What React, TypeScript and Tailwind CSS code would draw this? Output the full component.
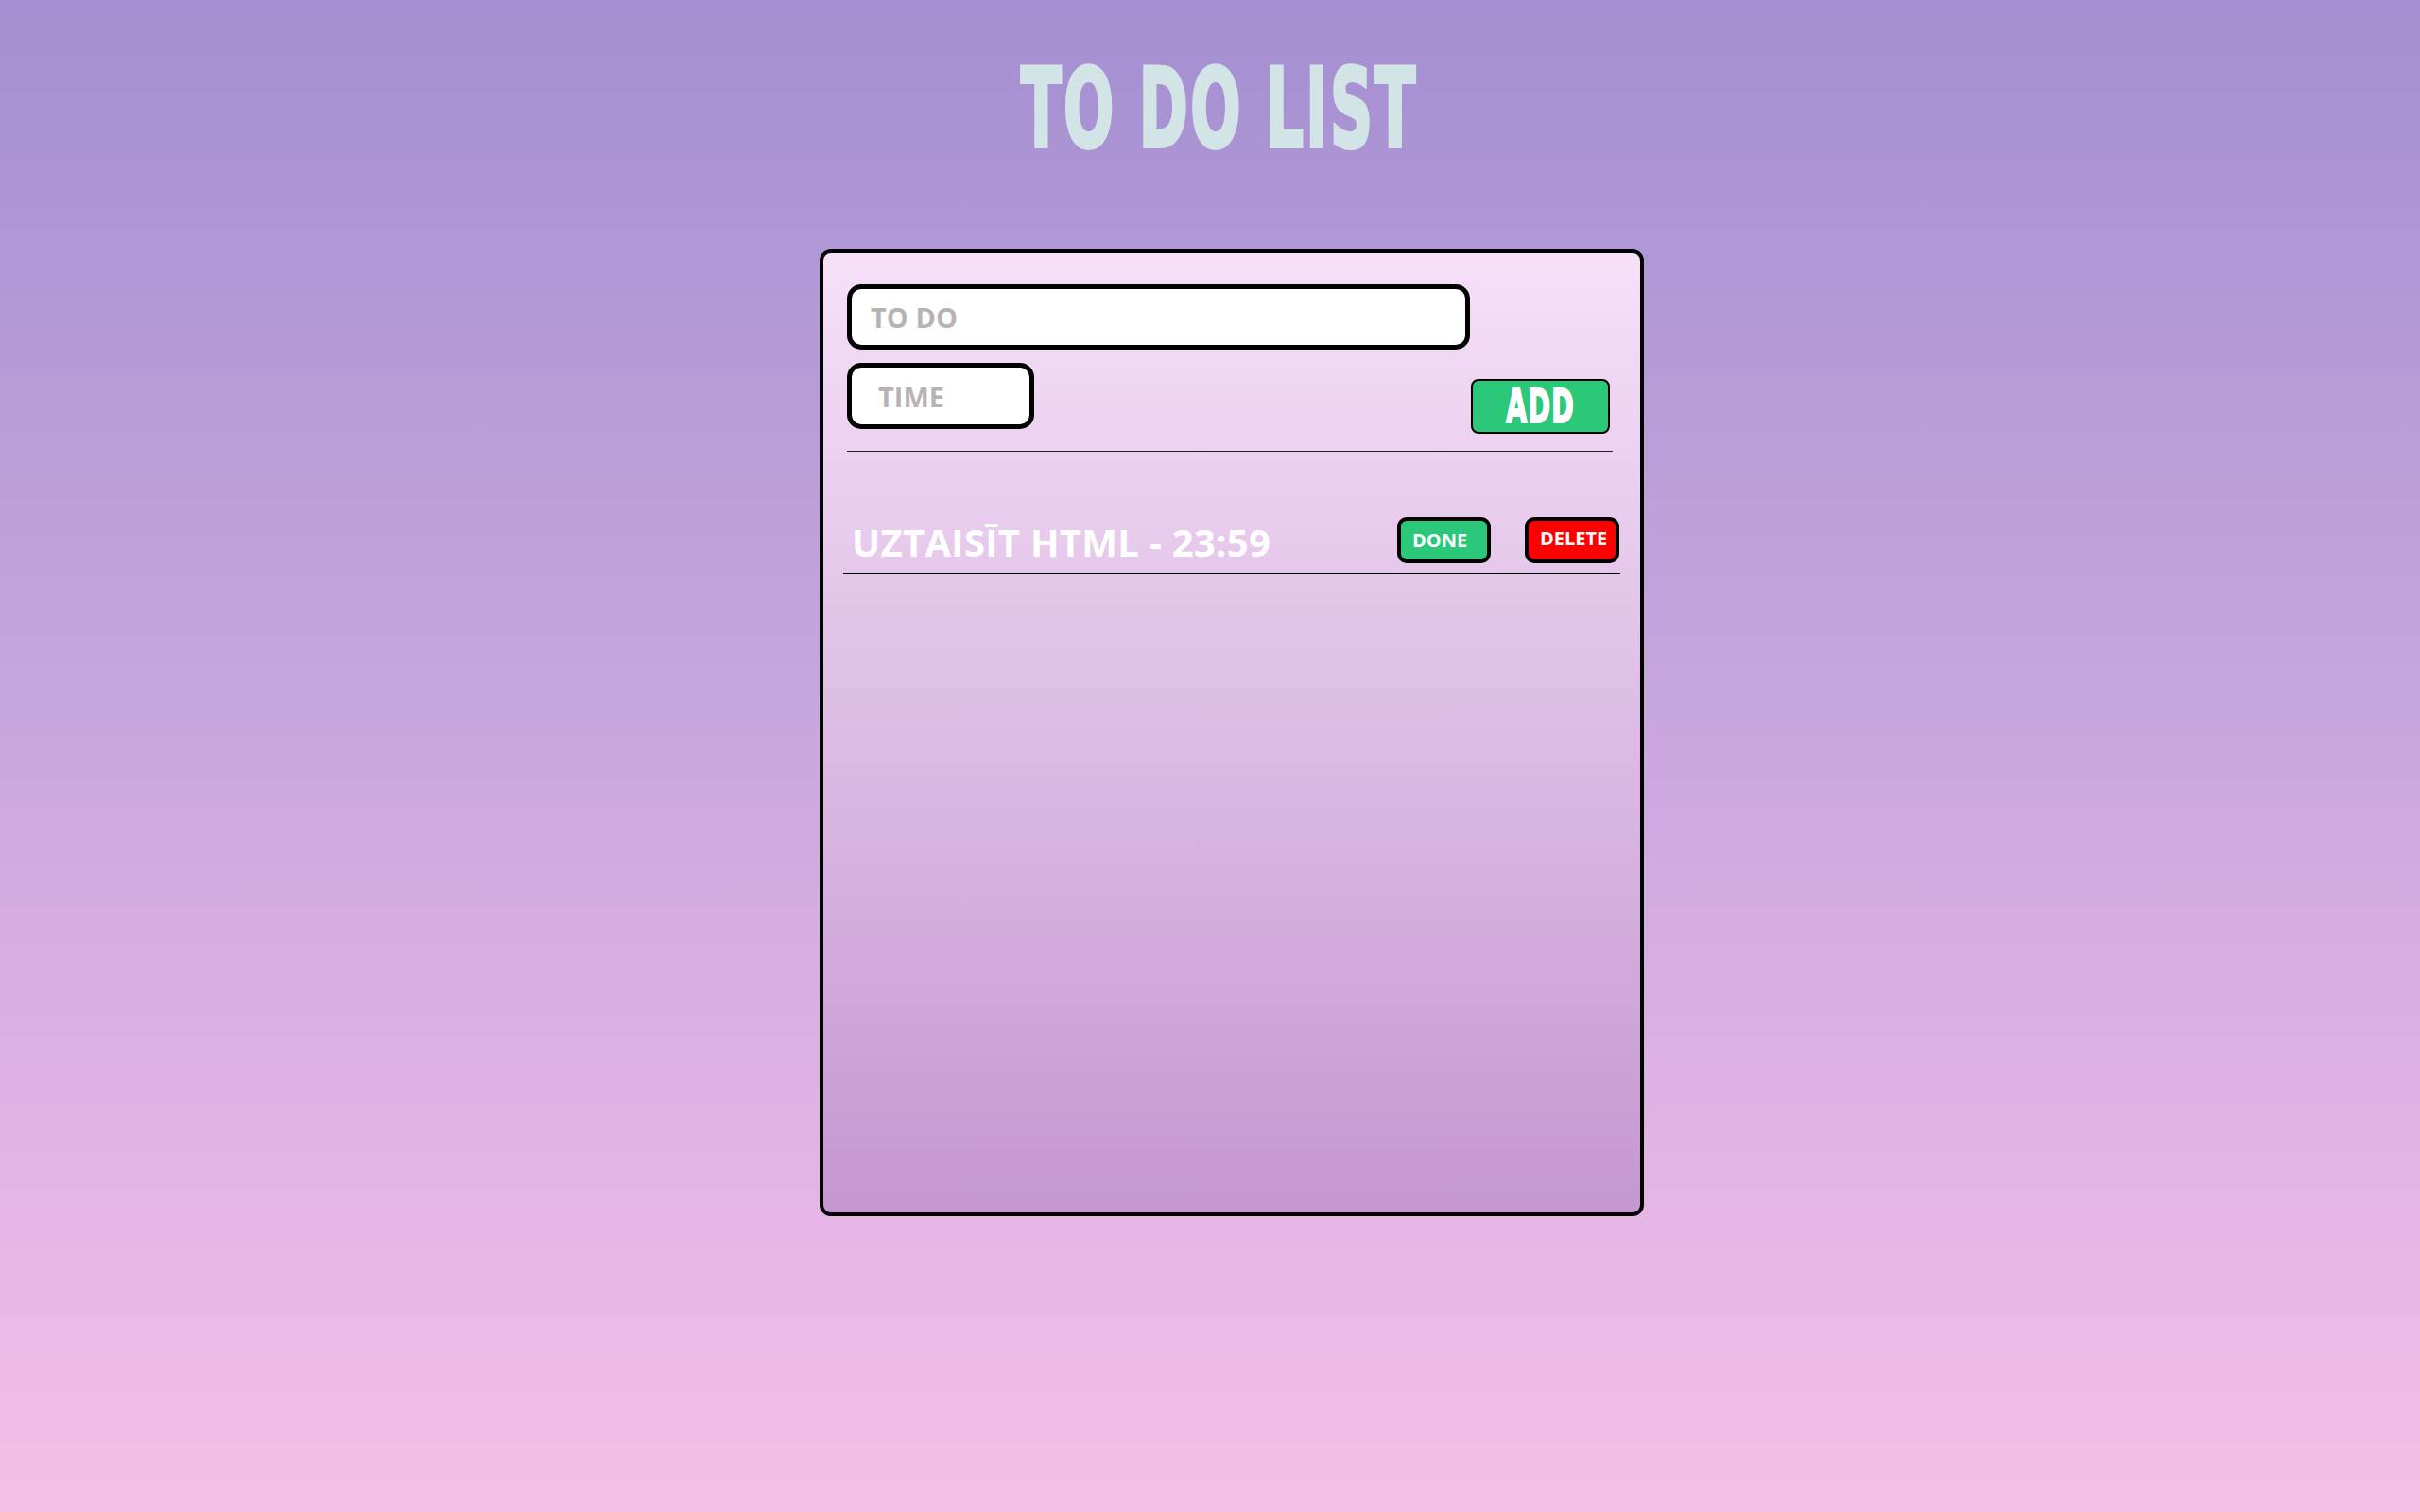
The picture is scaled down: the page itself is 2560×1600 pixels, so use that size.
import { useState } from 'react'

const display = "font-['Liberation_Sans_Narrow','DejaVu_Sans_Condensed',sans-serif] font-bold"
const body = "font-['Open_Sans','Noto_Sans',sans-serif]"

interface Todo {
  text: string
  time: string
}

export default function App() {
  const [todos] = useState<Todo[]>([{ text: 'UZTAISĪT HTML', time: '23:59' }])

  return (
    <div className="min-h-screen bg-linear-to-b from-[#a38fd1] to-[#f5bfea] flex flex-col items-center">
      <h1 className={`${display} ml-[20px] mt-[47px] text-[116px] leading-[136px] text-[#d3e4e6] [-webkit-text-stroke:4px_#d3e4e6] scale-x-[0.6] tracking-[4px]`}>
        TO DO LIST
      </h1>

      <div className="ml-[46px] mt-[81px] w-[872px] h-[1023px] rounded-[12px] border-4 border-black bg-linear-to-b from-[#f6e0f8] to-[#c497d0] pl-[25px] pr-[29px] pt-[33px]">
        <input
          placeholder="TO DO"
          className={`${body} block w-[659px] h-[69px] rounded-[15px] border-[5px] border-black bg-white pl-[20px] text-[29px] font-bold placeholder:text-[#b8b3b3] outline-none`}
        />
        <div className="flex justify-between items-start mt-[14px]">
          <input
            placeholder="TIME"
            className={`${body} block w-[198px] h-[70px] rounded-[15px] border-[5px] border-black bg-white pl-[28px] text-[29px] font-bold placeholder:text-[#b8b3b3] outline-none`}
          />
          <button className="mt-[17px] mr-[3px] w-[147px] h-[58px] rounded-[8px] border-2 border-black bg-[#2bc87a] flex items-center justify-center">
            <span className={`${display} text-white text-[50px] leading-none [-webkit-text-stroke:2px_white] scale-x-[0.63] tracking-[2px]`}>ADD</span>
          </button>
        </div>
        <div className="mt-[18px] border-t border-[#222]" />

        <ul className="mt-[69px]">
          {todos.map(t => (
            <li key={t.text} className="-ml-[4px] -mr-[8px] border-b border-black flex items-center pb-[10px]">
              <span className={`${body} ml-[9px] mt-[5px] text-[40px] leading-none font-bold tracking-[0.3px] text-white`}>
                {t.text} - {t.time}
              </span>
              <button className={`${body} ml-auto w-[99px] h-[49px] rounded-[10px] border-4 border-black bg-[#2bc87a] text-left pl-[12px] text-[20px] font-bold text-white leading-none`}>
                DONE
              </button>
              <button className={`${body} ml-[36px] mr-[1px] w-[100px] h-[49px] rounded-[10px] border-4 border-black bg-[#ff0000] text-left pl-[12px] pb-[3px] text-[20px] font-bold text-white leading-none`}>
                DELETE
              </button>
            </li>
          ))}
        </ul>
      </div>
    </div>
  )
}
